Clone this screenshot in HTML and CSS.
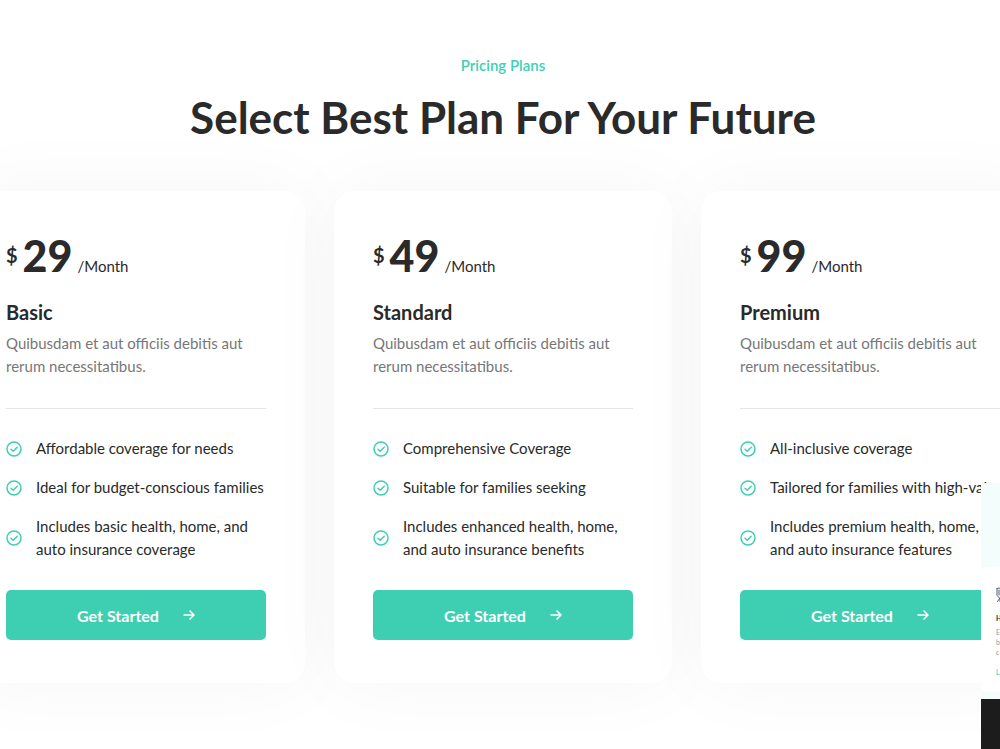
FILE: index.html
```
<!DOCTYPE html>
<html lang="en">
<head>
  <meta charset="UTF-8" />
  <meta name="viewport" content="width=device-width, initial-scale=1" />
  <title>Pricing Plans</title>
  <link rel="stylesheet" href="styles.css">
</head>
<body>
  <svg class="sprite" aria-hidden="true">
    <symbol id="check" viewBox="0 0 16 16">
      <circle cx="8" cy="8" r="7" />
      <path d="M5 8.3l2.2 2L11.2 6.2" />
    </symbol>
    <symbol id="arrow" viewBox="0 0 12 12">
      <path d="M1 6h10M7 2l4 4-4 4" />
    </symbol>
  </svg>

  <section class="pricing">
    <header class="section-title">
      <p class="subtitle">Pricing Plans</p>
      <h2>Select Best Plan For Your Future</h2>
    </header>

    <div class="plans">
      <article class="plan">
        <div class="price"><sup>$</sup><strong>29</strong><span>/Month</span></div>
        <h3>Basic</h3>
        <p class="desc">Quibusdam et aut officiis debitis aut rerum necessitatibus.</p>
        <ul>
          <li><svg><use href="#check" /></svg><span>Affordable coverage for needs</span></li>
          <li><svg><use href="#check" /></svg><span>Ideal for budget-conscious families</span></li>
          <li><svg><use href="#check" /></svg><span>Includes basic health, home, and auto insurance coverage</span></li>
        </ul>
        <a class="btn" href="#">Get Started <svg><use href="#arrow" /></svg></a>
      </article>

      <article class="plan">
        <div class="price"><sup>$</sup><strong>49</strong><span>/Month</span></div>
        <h3>Standard</h3>
        <p class="desc">Quibusdam et aut officiis debitis aut rerum necessitatibus.</p>
        <ul>
          <li><svg><use href="#check" /></svg><span>Comprehensive Coverage</span></li>
          <li><svg><use href="#check" /></svg><span>Suitable for families seeking</span></li>
          <li><svg><use href="#check" /></svg><span>Includes enhanced health, home, and auto insurance benefits</span></li>
        </ul>
        <a class="btn" href="#">Get Started <svg><use href="#arrow" /></svg></a>
      </article>

      <article class="plan">
        <div class="price"><sup>$</sup><strong>99</strong><span>/Month</span></div>
        <h3>Premium</h3>
        <p class="desc">Quibusdam et aut officiis debitis aut rerum necessitatibus.</p>
        <ul>
          <li><svg><use href="#check" /></svg><span>All-inclusive coverage</span></li>
          <li><svg><use href="#check" /></svg><span class="one-line">Tailored for families with high-val</span></li>
          <li><svg><use href="#check" /></svg><span>Includes premium health, home, and auto insurance features</span></li>
        </ul>
        <a class="btn" href="#">Get Started <svg><use href="#arrow" /></svg></a>
      </article>
    </div>
  </section>

  <!-- demo preview peeking in from the right edge -->
  <aside class="preview" aria-hidden="true">
    <div class="preview-card">
      <svg viewBox="0 0 12 16"><path d="M1 1.5q2-1 4 0v6l3 3M1 1.5v7l3 3v3M3 3v5M1.500 14.500L4 11" /></svg>
      <b>H</b>
      <p>E<br>b<br>c</p>
      <i>L</i>
    </div>
    <div class="preview-footer"></div>
  </aside>
</body>
</html>
```

FILE: styles.css
```
* {
  box-sizing: border-box;
}
body {
  margin: 0;
  min-height: 100vh;
  overflow: hidden;
  position: relative;
  font-family: Lato, sans-serif;
  font-size: 15px;
  line-height: 23px;
  color: #2a2a2a;
  background: #fff;
}
h2, h3, p, ul {
  margin: 0;
  padding: 0;
}
.sprite {
  position: absolute;
  width: 0;
  height: 0;
}
svg {
  flex: none;
  fill: none;
  stroke: currentColor;
  stroke-linecap: round;
  stroke-linejoin: round;
}
.pricing {
  padding: 54px 0 66px;
  margin: 0 -39px 0 -33px;
}
.section-title {
  text-align: center;
}
.subtitle {
  color: #3ecfb2;
  font-weight: 600;
}
h2 {
  margin-top: 12px;
  font-size: 44px;
  line-height: 56px;
  font-weight: 700;
}
.plans {
  display: grid;
  grid-template-columns: repeat(3, 1fr);
  gap: 29px;
  margin-top: 46px;
}
.plan {
  padding: 39px 39px 43px;
  border-radius: 20px;
  background: #fff;
  box-shadow: 0 0 80px rgba(0, 0, 0, 0.04);
}
.price {
  display: flex;
  align-items: baseline;
  gap: 5px;
  height: 61px;
  line-height: 52px;
}
.price sup {
  align-self: flex-start;
  font-size: 20px;
  line-height: 50px;
  font-weight: 700;
}
.price strong {
  font-size: 43px;
  font-weight: 900;
}
h3 {
  margin-top: 8px;
  font-size: 20px;
  line-height: 26px;
  font-weight: 700;
}
.desc {
  margin-top: 7px;
  padding-bottom: 30px;
  border-bottom: 1px solid #e4e4e4;
  color: #777;
}
.plan ul {
  list-style: none;
  display: grid;
  gap: 16px;
  margin: 28px 0 29px;
}
.plan li {
  display: flex;
  align-items: center;
  gap: 14px;
}
.plan li svg {
  width: 16px;
  height: 16px;
  color: #3ecfb2;
  stroke-width: 1.5;
}
.one-line {
  white-space: nowrap;
}
.btn {
  display: flex;
  align-items: center;
  justify-content: center;
  gap: 24px;
  height: 50px;
  border-radius: 5px;
  background: #3ecfb2;
  color: #fff;
  font-size: 16px;
  font-weight: 700;
  text-decoration: none;
}
.btn svg {
  width: 12px;
  height: 12px;
  stroke-width: 1.5;
}
.preview {
  position: absolute;
  right: 0;
  bottom: 0;
  width: 19px;
  height: 266px;
  padding-top: 84px;
  overflow: hidden;
  background: #f3fdfb;
}
.preview-card {
  height: 125px;
  padding: 20px 0 0 15px;
  overflow: hidden;
  border-radius: 6px 0 0 6px;
  background: #fff;
  font-size: 7px;
  line-height: 10px;
}
.preview-card svg {
  display: block;
  width: 12px;
  height: 16px;
  color: #4d5f78;
}
.preview-card b,
.preview-card i {
  display: block;
}
.preview-card b {
  margin: 10px 0 4px;
}
.preview-card p {
  color: #999;
}
.preview-card i {
  margin-top: 10px;
  font-style: normal;
  color: #3ecfb2;
}
.preview-footer {
  height: 50px;
  margin-top: 7px;
  background: #1c1c1c;
}
```
